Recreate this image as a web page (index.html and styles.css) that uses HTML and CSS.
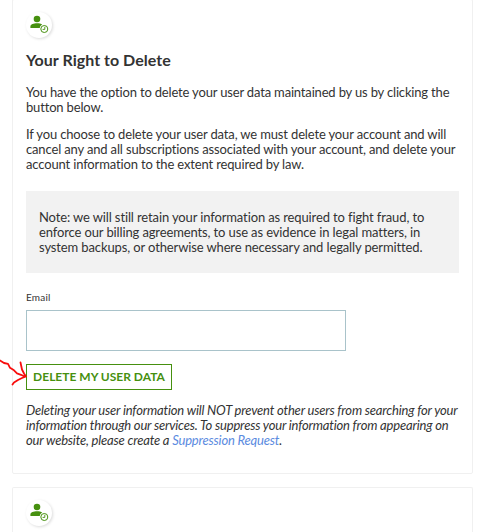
FILE: index.html
```html
<!DOCTYPE html>
<html lang="en">
<head>
  <meta charset="UTF-8" />
  <meta name="viewport" content="width=device-width, initial-scale=1.0"/>
  <title>Your Right to Delete</title>
  <link rel="stylesheet" href="styles.css">
</head>
<body>
  <svg width="0" height="0" class="defs">
    <symbol id="user-clock" viewBox="0 0 26 26">
      <circle cx="11" cy="7" r="3.3" fill="#46900f"/>
      <path d="M4.4 16v-1.4c0-2.5 3.4-3.4 6.6-3.4 2.2 0 4 .4 5.2 1.2-1.5.8-2.3 2-2.4 3.6z" fill="#46900f"/>
      <circle cx="18.3" cy="17" r="3.5" fill="none" stroke="#46900f" stroke-width="1"/>
      <path d="M18.8 14.8v2.6h-2.2" fill="none" stroke="#46900f" stroke-width=".9"/>
    </symbol>
  </svg>

  <section class="card">
    <div class="icon"><svg width="26" height="26"><use href="#user-clock"/></svg></div>
    <h2>Your Right to Delete</h2>
    <p class="intro">You have the option to delete your user data maintained by us by clicking the<br>button below.</p>
    <p class="terms">If you choose to delete your user data, we must delete your account and will<br>cancel any and all subscriptions associated with your account, and delete your<br>account information to the extent required by law.</p>
    <div class="note">Note: we will still retain your information as required to fight fraud, to<br>enforce our billing agreements, to use as evidence in legal matters, in<br>system backups, or otherwise where necessary and legally permitted.</div>
    <label for="email">Email</label>
    <input type="email" id="email" />
    <button type="button">DELETE MY USER DATA</button>
    <p class="info">Deleting your user information will NOT prevent other users from searching for your<br>information through our services. To suppress your information from appearing on<br>our website, please create a <a href="#">Suppression Request</a>.</p>
  </section>

  <section class="card next">
    <div class="icon"><svg width="26" height="26"><use href="#user-clock"/></svg></div>
  </section>

  <svg class="arrow" width="30" height="32" viewBox="0 0 30 32">
    <path d="M0 3.5l4 2.5 4 .8 2 4 4 2.5 3 3 4 1.5 4 2M20.5 5.5l1.5 7 2 4 2 3-4 1.5-4 2-4 2.5-1.5 2"/>
  </svg>
</body>
</html>
```

FILE: styles.css
```css
* {
  box-sizing: border-box;
}
body {
  margin: 0;
  height: 532px;
  overflow: hidden;
  background: #fff;
  color: #333;
  font-family: Lato, sans-serif;
  font-size: 13px;
  line-height: 15px;
  white-space: nowrap;
}
.defs {
  display: block;
}
.card {
  width: 461px;
  height: 475px;
  margin: -1px 0 13px 12px;
  padding: 12px 13px;
  border: 1px solid #f0f0f0;
  border-radius: 2px;
}
.next {
  height: 45px;
  margin: 0 0 0 12px;
  border-bottom: none;
  border-radius: 2px 2px 0 0;
}
.icon {
  width: 26px;
  height: 26px;
  border-radius: 50%;
  box-shadow: 1px 1px 3px rgba(0, 0, 0, 0.14);
}
.icon svg {
  display: block;
}
h2 {
  margin: 12px 0 15px;
  font-size: 16px;
  line-height: 20px;
  font-weight: bold;
  letter-spacing: 0.03px;
}
p {
  margin: 0 0 12px;
}
.intro {
  letter-spacing: -0.17px;
}
.terms {
  letter-spacing: -0.15px;
}
.note {
  height: 82px;
  margin-top: 19px;
  padding: 19px 13px;
  background: #f2f2f2;
  letter-spacing: -0.125px;
}
label {
  display: block;
  margin-top: 17px;
  font-size: 10px;
  letter-spacing: 0.2px;
}
input {
  display: block;
  width: 320px;
  height: 41px;
  margin: 5px 0 13px;
  border: 1px solid #a9c3ca;
  background: #fff;
}
button {
  display: block;
  width: 146px;
  height: 26px;
  margin-bottom: 13px;
  padding: 0 0 1px;
  border: 1px solid #46900f;
  background: #fff;
  color: #46900f;
  font-family: inherit;
  font-size: 12px;
  font-weight: bold;
}
.info {
  font-style: italic;
  letter-spacing: -0.185px;
}
a {
  color: #5b8bdf;
  text-decoration: none;
}
/* hand-drawn pointer over the button edge */
.arrow {
  position: absolute;
  left: 0;
  top: 357px;
  fill: none;
  stroke: #f80d0d;
  stroke-width: 1.8;
  stroke-linecap: round;
  stroke-linejoin: round;
}
```
